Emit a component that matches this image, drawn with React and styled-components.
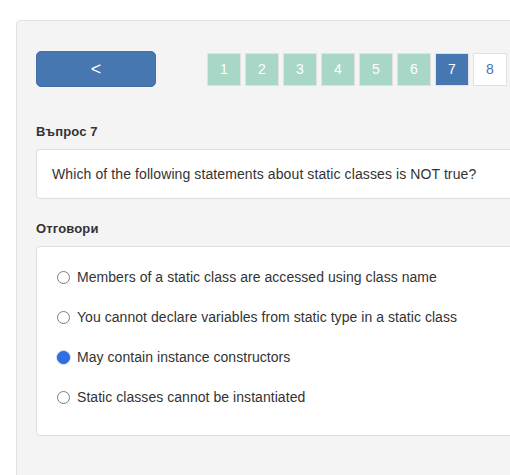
import styled, { createGlobalStyle } from "styled-components";

const GlobalStyle = createGlobalStyle`
  html, body {
    margin: 0;
    padding: 0;
    background: #fff;
    overflow: hidden;
  }
  body {
    font-family: "Liberation Sans", Arial, sans-serif;
    color: #333;
  }
`;

const Page = styled.div`
  padding: 20px 0 0 16px;
  width: 640px;
`;

const Panel = styled.div`
  background: #f4f4f4;
  border: 1px solid #e2e2e2;
  border-radius: 4px;
  padding: 30px 0 60px 19px;
`;

const TopRow = styled.div`
  display: flex;
  align-items: center;
  gap: 51px;
  margin-bottom: 36px;
`;

const BackButton = styled.button`
  width: 120px;
  height: 36px;
  background: #4677b1;
  border: 1px solid #4170a8;
  border-radius: 5px;
  color: #fff;
  font-family: "Liberation Sans", Arial, sans-serif;
  font-size: 18px;
  padding: 0;
  cursor: pointer;
`;

const Pager = styled.div`
  display: flex;
  gap: 4px;
`;

const PageBox = styled.div`
  width: 32px;
  height: 31px;
  border: 1px solid #e1e1e1;
  display: flex;
  align-items: center;
  justify-content: center;
  font-size: 14px;
  background: ${(p) =>
    p.$state === "done" ? "#a8d6c7" : p.$state === "active" ? "#4577b1" : "#fff"};
  color: ${(p) => (p.$state === "next" ? "#4577b1" : "#fff")};
`;

const Label = styled.div`
  font-size: 13px;
  font-weight: bold;
  line-height: 18px;
  letter-spacing: 0.15px;
  color: #333;
  margin-bottom: 8px;
`;

const Card = styled.div`
  background: #fff;
  border: 1px solid #dedede;
  border-radius: 4px;
`;

const QuestionCard = styled(Card)`
  padding: 14px 15px;
  font-size: 14px;
  line-height: 20px;
  letter-spacing: 0.1px;
  margin-bottom: 21px;
`;

const AnswersCard = styled(Card)`
  padding: 20px 20px 28px;
  display: flex;
  flex-direction: column;
  gap: 20px;
`;

const Option = styled.label`
  display: flex;
  align-items: center;
  gap: 7px;
  font-size: 14px;
  line-height: 20px;
  letter-spacing: 0.05px;
  color: #333;
`;

const Radio = styled.input.attrs({ type: "radio" })`
  appearance: none;
  margin: 0;
  width: 13px;
  height: 13px;
  border-radius: 50%;
  border: 1px solid #7a7a7a;
  background: #fff;
  box-sizing: border-box;
  &:checked {
    background: #2f6fe0;
    border-color: #2a63cc;
    box-shadow: 0 0 0 1px #c9dafa;
  }
`;

const pages = [1, 2, 3, 4, 5, 6, 7, 8];
const answers = [
  "Members of a static class are accessed using class name",
  "You cannot declare variables from static type in a static class",
  "May contain instance constructors",
  "Static classes cannot be instantiated",
];

export default function App() {
  return (
    <>
      <GlobalStyle />
      <Page>
        <Panel>
          <TopRow>
            <BackButton>&lt;</BackButton>
            <Pager>
              {pages.map((n) => (
                <PageBox key={n} $state={n < 7 ? "done" : n === 7 ? "active" : "next"}>
                  {n}
                </PageBox>
              ))}
            </Pager>
          </TopRow>
          <Label>Въпрос 7</Label>
          <QuestionCard>Which of the following statements about static classes is NOT true?</QuestionCard>
          <Label>Отговори</Label>
          <AnswersCard>
            {answers.map((a, i) => (
              <Option key={i}>
                <Radio name="answer" defaultChecked={i === 2} />
                {a}
              </Option>
            ))}
          </AnswersCard>
        </Panel>
      </Page>
    </>
  );
}
